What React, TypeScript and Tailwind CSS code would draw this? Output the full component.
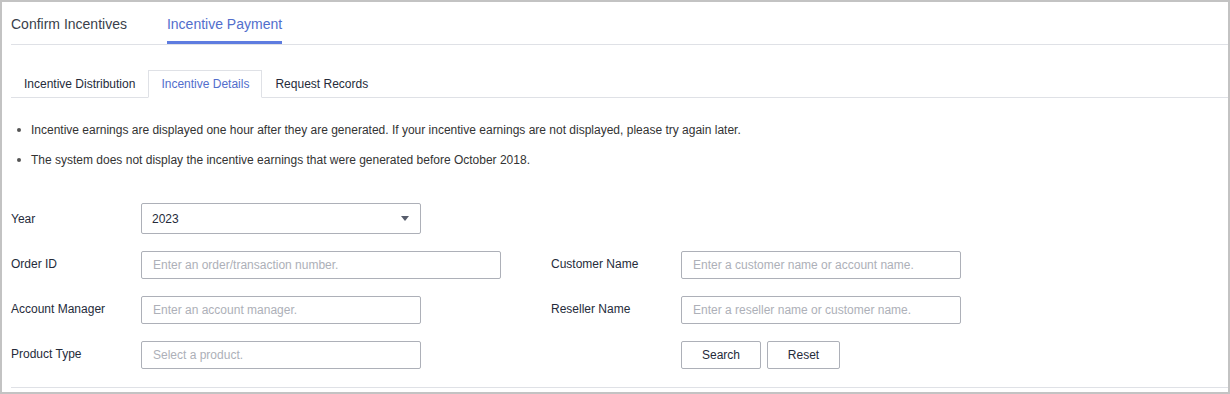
import React from "react";

const font = { fontFamily: '"Liberation Sans", Arial, sans-serif' };

function Field({ label, placeholder, w = "w-[280px]" }: { label: string; placeholder: string; w?: string }) {
  return (
    <div className="flex items-start">
      <div className="w-[130px] pt-[3px] leading-[20px] text-[12px] text-[#252b3a]">{label}</div>
      <div className={`${w} h-[28px] border border-[#adb0b8] rounded-[2px] flex items-center px-[11px] text-[12px] text-[#adb0b8] bg-white`}>
        {placeholder}
      </div>
    </div>
  );
}

export default function App() {
  return (
    <div style={font} className="w-[1230px] h-[394px] border-2 border-[#c3c3c3] bg-white overflow-hidden">
      <div className="pl-[9px]">
        {/* top tabs */}
        <div className="h-[43px] border-b border-[#dfe1e6] flex gap-[40px]">
          <div className="relative pt-[12px] leading-[20px] text-[14px] text-[#3a3f4b]">Confirm Incentives</div>
          <div className="relative pt-[12px] leading-[20px] text-[14px] text-[#526ecc]">
            Incentive Payment
            <div className="absolute left-0 right-0 bottom-0 h-[3px] bg-[#5e7ce0]" />
          </div>
        </div>

        {/* sub tabs */}
        <div className="mt-[25px] flex border-b border-[#dfe1e6]">
          <div className="h-[28px] -mb-px px-3 border border-transparent flex items-center text-[12px] text-[#252b3a]">Incentive Distribution</div>
          <div className="h-[28px] -mb-px px-3 border border-[#dfe1e6] border-b-white bg-white flex items-center text-[12px] text-[#526ecc]">Incentive Details</div>
          <div className="h-[28px] -mb-px px-3 border border-transparent flex items-center text-[12px] text-[#252b3a]">Request Records</div>
        </div>

        {/* notes */}
        <div className="mt-[22px] flex flex-col gap-[10px] text-[12px] text-[#333] leading-[20px]">
          <div className="flex items-center">
            <span className="w-[4px] h-[4px] rounded-full bg-[#555] ml-[6px] mr-[10px]" />
            Incentive earnings are displayed one hour after they are generated. If your incentive earnings are not displayed, please try again later.
          </div>
          <div className="flex items-center">
            <span className="w-[4px] h-[4px] rounded-full bg-[#555] ml-[6px] mr-[10px]" />
            The system does not display the incentive earnings that were generated before October 2018.
          </div>
        </div>

        {/* form */}
        <div className="mt-[33px] flex flex-col gap-[17px]">
          <div className="flex items-center">
            <div className="w-[130px] text-[12px] leading-[20px] text-[#252b3a]">Year</div>
            <div className="w-[280px] h-[31px] border border-[#adb0b8] rounded-[2px] flex items-center justify-between pl-[10px] pr-[11px] text-[12px] text-[#252b3a] bg-white">
              <span>2023</span>
              <svg width="8" height="5" viewBox="0 0 8 5"><path d="M0 0h8L4 5z" fill="#575d6c" /></svg>
            </div>
          </div>
          <div className="flex">
            <div className="w-[540px]"><Field label="Order ID" placeholder="Enter an order/transaction number." w="w-[360px]" /></div>
            <Field label="Customer Name" placeholder="Enter a customer name or account name." />
          </div>
          <div className="flex">
            <div className="w-[540px]"><Field label="Account Manager" placeholder="Enter an account manager." /></div>
            <Field label="Reseller Name" placeholder="Enter a reseller name or customer name." />
          </div>
          <div className="flex">
            <div className="w-[540px]"><Field label="Product Type" placeholder="Select a product." /></div>
            <div className="flex pl-[130px] gap-[6px]">
              <div className="w-[80px] h-[28px] border border-[#adb0b8] rounded-[2px] flex items-center justify-center text-[12px] text-[#252b3a]">Search</div>
              <div className="w-[73px] h-[28px] border border-[#adb0b8] rounded-[2px] flex items-center justify-center text-[12px] text-[#252b3a]">Reset</div>
            </div>
          </div>
        </div>

        <div className="mt-[18px] border-b border-[#dfe1e6]" />
      </div>
    </div>
  );
}
